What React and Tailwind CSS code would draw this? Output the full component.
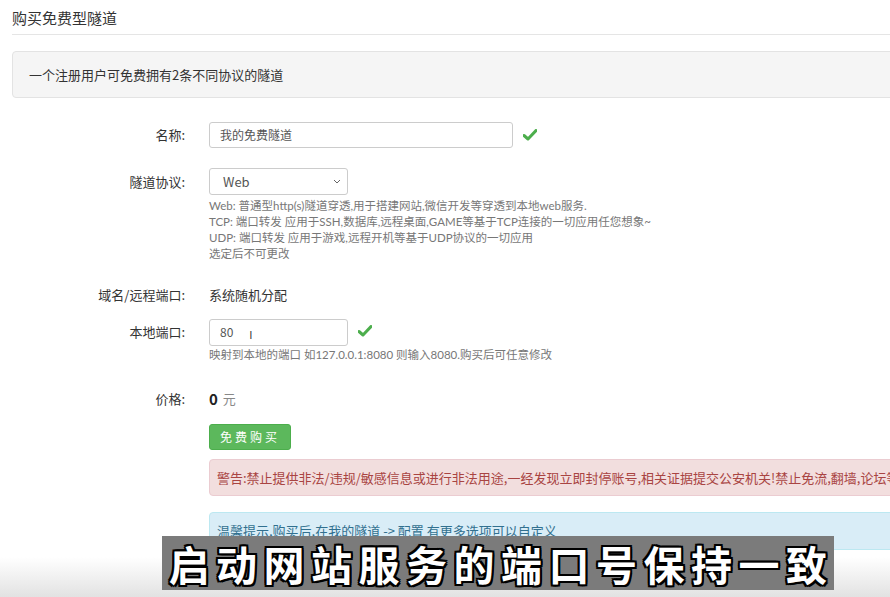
const font = { fontFamily: '"Noto Sans CJK SC", "Noto Sans", sans-serif' };
const helpFont = { fontFamily: 'Lato, "Noto Sans CJK SC", sans-serif' };

const Check = () => (
  <svg width="14" height="12" viewBox="0 0 14 12" className="shrink-0">
    <path d="M1 6.5 L5 10 L13 1.5" fill="none" stroke="#4cae4c" strokeWidth="3" strokeLinecap="round" strokeLinejoin="round" />
  </svg>
);

const Row = ({ label, children, className = '' }) => (
  <div className={`flex items-center ${className}`}>
    <div className="w-[185px] shrink-0 text-right text-[13px] text-[#333]">{label}</div>
    <div className="ml-[24px] flex items-center">{children}</div>
  </div>
);

const Help = ({ children }) => (
  <div className="ml-[209px] text-[11.5px] leading-[16px] text-[#777]" style={helpFont}>{children}</div>
);

export default function App() {
  return (
    <div className="relative h-[597px] w-[890px] overflow-hidden bg-white" style={font}>
      <div className="w-[1100px] pl-[12px]">
        <div className="pt-[8px] pb-[6px] text-[15px] leading-[20px] text-[#333] border-b border-[#e5e5e5]">购买免费型隧道</div>

        <div className="mt-[16px] h-[47px] rounded-[4px] border border-[#e3e3e3] bg-[#f5f5f5] pl-[16px] flex items-center text-[13px] text-[#333]">
          一个注册用户可免费拥有2条不同协议的隧道
        </div>

        <div className="-ml-[12px]">
          <Row label="名称:" className="mt-[24px]">
            <div className="h-[26px] w-[304px] rounded-[3px] border border-[#ccc] px-[10px] flex items-center text-[12px] text-[#555]">我的免费隧道</div>
            <span className="ml-[10px]"><Check /></span>
          </Row>

          <Row label="隧道协议:" className="mt-[20px]">
            <div className="h-[27px] w-[139px] rounded-[3px] border border-[#ccc] pl-[13px] pr-[6px] flex items-center justify-between text-[13px] text-[#555]">
              <span>Web</span>
              <svg width="8" height="5" viewBox="0 0 8 5"><path d="M1 1 L4 4 L7 1" fill="none" stroke="#666" strokeWidth="1" /></svg>
            </div>
          </Row>
          <div className="mt-[3px]">
            <Help>
              <div>Web: 普通型http(s)隧道穿透,用于搭建网站,微信开发等穿透到本地web服务.</div>
              <div>TCP: 端口转发 应用于SSH,数据库,远程桌面,GAME等基于TCP连接的一切应用任您想象~</div>
              <div>UDP: 端口转发 应用于游戏,远程开机等基于UDP协议的一切应用</div>
              <div>选定后不可更改</div>
            </Help>
          </div>

          <Row label="域名/远程端口:" className="mt-[23px]">
            <span className="text-[13px] text-[#333]">系统随机分配</span>
          </Row>

          <Row label="本地端口:" className="mt-[14px]">
            <div className="h-[27px] w-[139px] rounded-[3px] border border-[#ccc] px-[10px] flex items-center text-[12px] text-[#555]">
              80
              <span className="ml-[16px] mt-[4px] text-[11px] text-[#333]">I</span>
            </div>
            <span className="ml-[10px] -mt-[2px]"><Check /></span>
          </Row>
          <div className="mt-[1px]">
            <Help>映射到本地的端口 如127.0.0.1:8080 则输入8080.购买后可任意修改</Help>
          </div>

          <Row label="价格:" className="mt-[25px]">
            <span className="text-[15px] font-bold text-[#222]">0</span>
            <span className="ml-[5px] text-[13px] text-[#888]">元</span>
          </Row>

          <div className="ml-[209px] mt-[14px] h-[26px] w-[82px] rounded-[3px] bg-[#5cb85c] border border-[#4cae4c] flex items-center justify-center text-[12px] tracking-[3px] text-white">免费购买</div>

          <div className="ml-[209px] mt-[9px] h-[37px] rounded-[4px] border border-[#ebccd1] bg-[#f2dede] pl-[7px] flex items-center whitespace-nowrap text-[13px] text-[#a94442]">
            警告:禁止提供非法/违规/敏感信息或进行非法用途,一经发现立即封停账号,相关证据提交公安机关!禁止免流,翻墙,论坛等
          </div>

          <div className="ml-[209px] mt-[16px] h-[38px] rounded-[4px] border border-[#bce8f1] bg-[#d9edf7] pl-[7px] flex items-center whitespace-nowrap text-[13px] text-[#31708f]">
            温馨提示,购买后,在我的隧道 -&gt; 配置 有更多选项可以自定义
          </div>
        </div>
      </div>

      <div className="absolute left-0 right-0 bottom-0 h-[40px] bg-gradient-to-b from-transparent to-[#e2e2e2]" />

      <div className="absolute left-[162px] top-[536px] h-[54px] w-[672px] bg-[#7b7b7b] flex items-center justify-center pl-[6px]">
        <span className="text-[41px] font-bold leading-none tracking-[6.5px] text-white [text-shadow:-2px_-2px_0_#000,2px_-2px_0_#000,-2px_2px_0_#000,2px_2px_0_#000,0_-2px_0_#000,0_2px_0_#000,-2px_0_0_#000,2px_0_0_#000]">启动网站服务的端口号保持一致</span>
      </div>
    </div>
  );
}
